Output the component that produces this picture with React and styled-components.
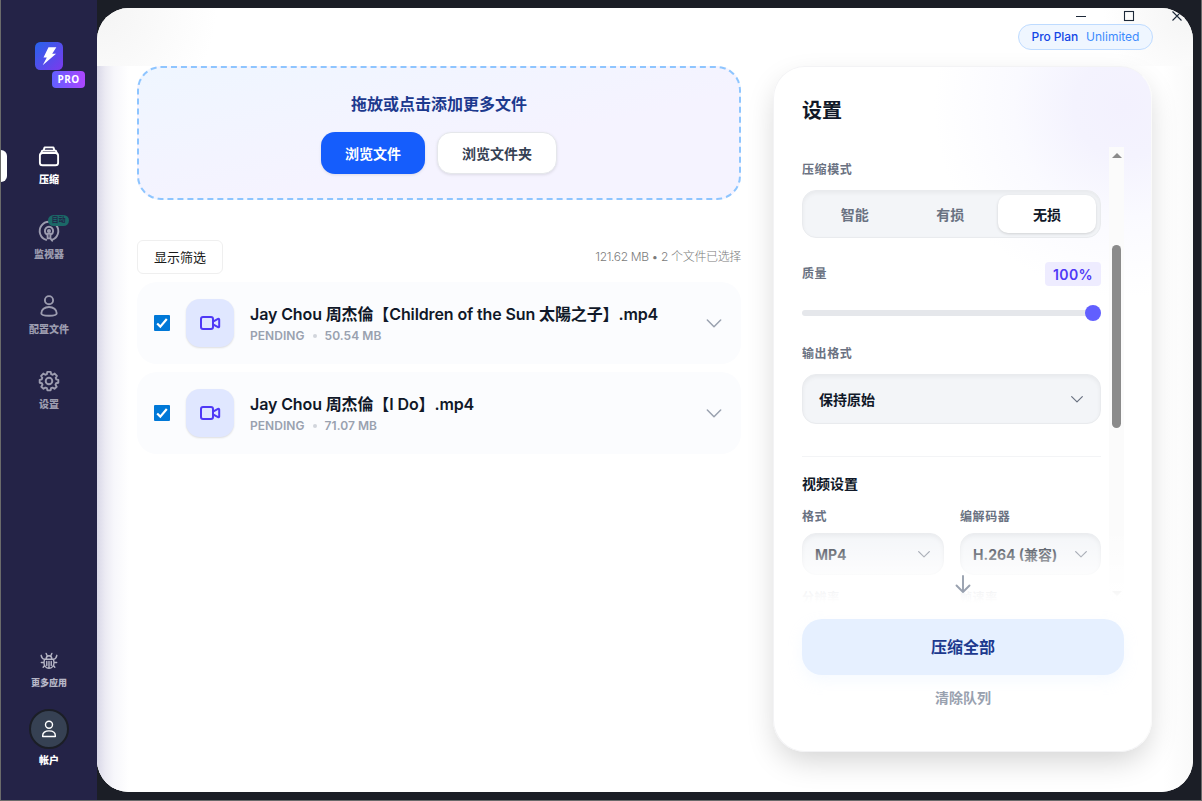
import React from 'react';
import styled, { createGlobalStyle, css } from 'styled-components';

const navItems = [
  { id: 'compress', label: '压缩', active: true },
  { id: 'monitor', label: '监视器', badge: '自动' },
  { id: 'profiles', label: '配置文件' },
  { id: 'settings', label: '设置' },
];

const files = [
  { name: 'Jay Chou 周杰倫【Children of the Sun 太陽之子】.mp4', size: '50.54 MB' },
  { name: 'Jay Chou 周杰倫【I Do】.mp4', size: '71.07 MB' },
];

const modes = ['智能', '有损', '无损'];

const NavIcon = ({ id }) => {
  if (id === 'compress') {
    return (
      <Icon $size={24} $stroke={1.9}>
        <rect x='2.9' y='9' width='18.2' height='12.3' rx='2.6' />
        <path d='M4.2 9.2 5.2 6.6H18.8L19.8 9.2M6.6 6.4 7.6 3.4H16.4L17.4 6.4' />
      </Icon>
    );
  }
  if (id === 'monitor') {
    return (
      <Icon $size={24} $stroke={1.9}>
        <path d='M9.2 20.9A9.3 9.3 0 1 1 14.8 20.9' />
        <path d='M9.6 15.2A4.1 4.1 0 1 1 14.4 15.2' />
        <circle cx='12' cy='12' r='1.1' />
        <path d='M10.6 14.6H13.4V19.4H10.6ZM13.4 19.4 15.2 21.8' />
      </Icon>
    );
  }
  if (id === 'profiles') {
    return (
      <Icon $size={24} $stroke={1.9}>
        <circle cx='12' cy='6.2' r='4.1' />
        <path d='M4.3 19.3C4.3 15.6 7.6 13 12 13S19.7 15.6 19.7 19.3C19.7 21.2 17 21.8 12 21.8S4.3 21.2 4.3 19.3Z' />
      </Icon>
    );
  }
  return (
    <Icon $size={24} $stroke={1.9}>
      <circle cx='12' cy='12' r='3.3' />
      <path d='M10.3 2.9H13.7L14.2 5.2 15.7 5.8 17.7 4.6 19.9 6.9 18.7 8.8 19.2 10.3 21.3 10.8V13.8L19.1 14.3 18.5 15.7 19.7 17.7 17.5 19.8 15.6 18.6 14.1 19.2 13.6 21.4H10.4L9.9 19.2 8.4 18.6 6.5 19.8 4.3 17.7 5.5 15.7 4.9 14.3 2.7 13.8V10.8L4.8 10.3 5.3 8.8 4.1 6.9 6.3 4.6 8.3 5.8 9.8 5.2Z' />
    </Icon>
  );
};

const BugIcon = () => (
  <Icon $size={20} $stroke={1.7}>
    <path d='M6.6 9.8H17.4L18 13.8C18 17.8 15.6 20.8 12 20.8S6 17.8 6 13.8ZM12 12.5V20.5M8.6 9.6C8.6 7.4 9.8 5.6 12 5.6S15.4 7.4 15.4 9.6M9.8 5.8 8.6 3M14.2 5.8 15.4 3M6 13.8H2.8M18 13.8H21.2M6.6 10C4.2 9.4 3 7.8 2.6 5.2M17.4 10C19.8 9.4 21 7.8 21.4 5.2M6.9 17.2 5 19.4M17.1 17.2 19 19.4M9.3 12.6V17.4M14.7 12.6V17.4' />
  </Icon>
);

const VideoIcon = () => (
  <Icon $size={24} $stroke={2}>
    <rect x='3' y='6' width='12' height='12' rx='2' />
    <path d='M15 10.6 20 7.8C20.6 7.5 21.2 7.9 21.2 8.5V15.5C21.2 16.1 20.6 16.5 20 16.2L15 13.4' />
  </Icon>
);

const Chevron = ({ size }) => (
  <Icon $size={size} $stroke={1.8}>
    <path d='M4 8.4 12 16.4 20 8.4' />
  </Icon>
);

const Select = ({ children, small }) => (
  <SelectBox $small={small}>
    <span>{children}</span>
    <Chevron size={16} />
  </SelectBox>
);

const Sidebar = () => (
  <StyledSidebar>
    <Logo>
      <svg width='28' height='28' viewBox='0 0 27 27'>
        <defs>
          <linearGradient id='logo' x1='0' y1='0' x2='1' y2='1'>
            <stop offset='0' stopColor='#2663eb' />
            <stop offset='1' stopColor='#7c3aed' />
          </linearGradient>
        </defs>
        <rect width='27' height='27' rx='5' fill='url(#logo)' />
        <path d='M13 5H20.6L16.6 11.4H20.3L7.4 22.3 11.4 15H8.2Z' fill='#fff' />
      </svg>
      <ProBadge>PRO</ProBadge>
    </Logo>
    <Nav>
      {navItems.map((item) => (
        <NavItem key={item.id} $active={item.active}>
          <NavIcon id={item.id} />
          {item.badge && <AutoBadge>{item.badge}</AutoBadge>}
          <span>{item.label}</span>
        </NavItem>
      ))}
    </Nav>
    <MoreApps>
      <BugIcon />
      <span>更多应用</span>
    </MoreApps>
    <Account>
      <Avatar>
        <Icon $size={20} $stroke={1.7}>
          <circle cx='12' cy='6.8' r='4.2' />
          <path d='M4.4 21V20C4.4 16.4 7.4 14.2 12 14.2S19.6 16.4 19.6 20V21Z' />
        </Icon>
      </Avatar>
      <span>帐户</span>
    </Account>
  </StyledSidebar>
);

const Header = () => (
  <StyledHeader>
    <WindowControls>
      <svg width='12' height='12' viewBox='0 0 12 12'>
        <path d='M1 6.5H11' />
      </svg>
      <svg width='12' height='12' viewBox='0 0 12 12'>
        <rect x='1.5' y='1.5' width='9' height='9' />
      </svg>
      <svg width='12' height='12' viewBox='0 0 12 12'>
        <path d='M1.5 1.5 10.5 10.5M10.5 1.5 1.5 10.5' />
      </svg>
    </WindowControls>
    <Plan>
      <b>Pro Plan</b>
      <span>Unlimited</span>
    </Plan>
  </StyledHeader>
);

const FileRow = ({ file }) => (
  <StyledFile>
    <Check>
      <svg width='16' height='16' viewBox='0 0 16 16'>
        <path d='M3.2 8.5 6.3 11.6 12.8 4' fill='none' stroke='#fff' strokeWidth='2.2' />
      </svg>
    </Check>
    <Thumb>
      <VideoIcon />
    </Thumb>
    <FileInfo>
      <h3>{file.name}</h3>
      <p>
        <span>PENDING</span>
        <i />
        <em>{file.size}</em>
      </p>
    </FileInfo>
    <Chevron size={20} />
  </StyledFile>
);

const Settings = () => (
  <Card>
    <h2>设置</h2>
    <ScrollArea>
      <Fields>
        <Label>压缩模式</Label>
        <Segmented>
          {modes.map((mode, i) => (
            <Segment key={mode} $active={i === 2}>
              {mode}
            </Segment>
          ))}
        </Segmented>
        <QualityRow>
          <Label>质量</Label>
          <Percent>100%</Percent>
        </QualityRow>
        <Slider>
          <div className='thumb'></div>
        </Slider>
        <Label>输出格式</Label>
        <Select>保持原始</Select>
        <div className='line'></div>
        <h4>视频设置</h4>
        <Columns>
          <div>
            <Label>格式</Label>
            <Select small>MP4</Select>
            <Label>分辨率</Label>
          </div>
          <div>
            <Label>编解码器</Label>
            <Select small>H.264 (兼容)</Select>
            <Label>帧速率</Label>
          </div>
        </Columns>
      </Fields>
      <Scrollbar>
        <i className='up' />
        <div className='handle' />
        <i className='down' />
      </Scrollbar>
      <Fade>
        <Icon $size={24} $stroke={1.9}>
          <path d='M12 4V20M5.5 13.5 12 20 18.5 13.5' />
        </Icon>
      </Fade>
    </ScrollArea>
    <CompressButton>压缩全部</CompressButton>
    <ClearButton>清除队列</ClearButton>
  </Card>
);

const App = () => {
  return (
    <Shell>
      <GlobalStyle />
      <Sidebar />
      <Panel>
        <Header />
        <Content>
          <Queue>
            <DropZone>
              <h3>拖放或点击添加更多文件</h3>
              <div>
                <BrowseButton $primary>浏览文件</BrowseButton>
                <BrowseButton>浏览文件夹</BrowseButton>
              </div>
            </DropZone>
            <Toolbar>
              <FilterButton>显示筛选</FilterButton>
              <span>121.62 MB • 2 个文件已选择</span>
            </Toolbar>
            {files.map((file) => (
              <FileRow key={file.name} file={file} />
            ))}
          </Queue>
          <Settings />
        </Content>
      </Panel>
    </Shell>
  );
};

const GlobalStyle = createGlobalStyle`
  * {
    box-sizing: border-box;
    margin: 0;
    padding: 0;
  }

  body {
    font-family: Inter, 'Noto Sans CJK SC', sans-serif;
    color: #101828;
    overflow: hidden;
  }

  button {
    font-family: inherit;
    border: none;
  }
`;

const Icon = styled.svg.attrs({ viewBox: '0 0 24 24' })`
  width: ${(p) => p.$size}px;
  height: ${(p) => p.$size}px;
  flex: none;
  fill: none;
  stroke: currentColor;
  stroke-width: ${(p) => p.$stroke};
  stroke-linecap: round;
  stroke-linejoin: round;
`;

const Shell = styled.div`
  width: 1202px;
  height: 801px;
  display: flex;
  background: #1b1e26;
  border: solid #6b6b6b;
  border-width: 0 1px 1px;
`;

const StyledSidebar = styled.aside`
  width: 96px;
  flex: none;
  display: flex;
  flex-direction: column;
  align-items: center;
  background: #242347;
  color: #fff;
  padding-top: 42px;
`;

const Logo = styled.div`
  position: relative;
  height: 28px;

  svg {
    display: block;
  }
`;

const ProBadge = styled.span`
  position: absolute;
  left: 17px;
  top: 29px;
  width: 33px;
  height: 17px;
  border-radius: 4px;
  background: linear-gradient(90deg, #615fff, #ad46ff);
  font: 700 10px/17px 'Open Sans', sans-serif;
  letter-spacing: 0.4px;
  text-align: center;
`;

const Nav = styled.nav`
  width: 100%;
  margin-top: 67px;
  display: flex;
  flex-direction: column;
`;

const NavItem = styled.div`
  position: relative;
  height: 75px;
  padding-top: 7px;
  display: flex;
  flex-direction: column;
  align-items: center;
  gap: 3px;
  color: ${(p) => (p.$active ? '#fff' : '#9c9caf')};
  font-size: 10px;
  font-weight: 800;
  line-height: 16px;

  ${(p) =>
    p.$active &&
    css`
      &::before {
        content: '';
        position: absolute;
        left: 0;
        top: 13px;
        width: 6px;
        height: 32px;
        background: #fff;
        border-radius: 0 6px 6px 0;
      }
    `}
`;

const AutoBadge = styled.em`
  position: absolute;
  left: 47px;
  top: 3px;
  width: 21px;
  height: 11px;
  border-radius: 6px;
  background: #1b6867;
  color: #222447;
  font: 700 7px/9px 'Noto Sans CJK SC', sans-serif;
  text-align: center;
`;

const MoreApps = styled.div`
  margin-top: auto;
  display: flex;
  flex-direction: column;
  align-items: center;
  gap: 4px;
  color: #b6b6c6;
  font-size: 9px;
  font-weight: 800;
  line-height: 16px;
`;

const Account = styled.div`
  margin: 18px 0 32px;
  display: flex;
  flex-direction: column;
  align-items: center;
  gap: 3px;
  font-size: 10px;
  font-weight: 800;
  line-height: 16px;
`;

const Avatar = styled.div`
  width: 40px;
  height: 40px;
  border: 2px solid #1b1e26;
  border-radius: 50%;
  background: #364153;
  display: grid;
  place-items: center;
`;

const Panel = styled.main`
  width: 1096px;
  height: 784px;
  margin-top: 8px;
  border-radius: 32px;
  background: #fff;
  display: flex;
  flex-direction: column;
  overflow: hidden;
`;

const StyledHeader = styled.header`
  height: 58px;
  flex: none;
  display: flex;
  flex-direction: column;
  align-items: flex-end;
  padding-right: 40px;
  background: radial-gradient(circle at 0 0, #f4f4f4, #fff 120px),
    radial-gradient(circle at 100% 0, #f4f4f4, #fff 90px);
  background-size: 50% 100%;
  background-repeat: no-repeat;
  background-position: 0 0, 100% 0;
`;

const WindowControls = styled.div`
  display: flex;
  gap: 36px;
  margin-right: -30px;
  height: 16px;
  padding-top: 2px;

  svg {
    fill: none;
    stroke: #1d2939;
    stroke-width: 1.1;
  }
`;

const Plan = styled.div`
  width: 135px;
  height: 26px;
  padding-bottom: 2px;
  border: 1px solid #bedbff;
  border-radius: 13px;
  background: #eff6ff;
  display: flex;
  justify-content: center;
  align-items: center;
  gap: 8px;
  font-size: 12px;
  color: #3d8bfd;

  b {
    color: #1447e6;
    font-weight: 500;
    letter-spacing: -0.1px;
  }
`;

const Content = styled.div`
  flex: 1;
  display: flex;
  gap: 32px;
  padding: 0 40px;
  background: linear-gradient(90deg, #d9d8e8, #ebeaf3 8px, #f7f7fb 17px, rgba(255, 255, 255, 0) 32px),
    linear-gradient(270deg, #f9f9f9, #fff 30px);
`;

const Queue = styled.section`
  width: 604px;
`;

const DropZone = styled.div`
  height: 134px;
  border: 2px dashed #8ec5ff;
  border-radius: 24px;
  background: linear-gradient(to bottom right, #eff6ff, #f5f3ff 60%);
  padding-top: 24px;
  text-align: center;

  h3 {
    font-size: 16px;
    line-height: 24px;
    font-weight: 600;
    color: #1c398e;
  }

  div {
    display: flex;
    justify-content: center;
    gap: 12px;
    margin-top: 16px;
  }
`;

const BrowseButton = styled.button`
  height: 42px;
  padding: 0 24px 1px;
  border-radius: 14px;
  font-size: 14px;
  font-weight: 700;
  background: #fff;
  color: #364153;
  border: 1px solid #e5e7eb;
  box-shadow: 0 1px 3px rgba(0, 0, 0, 0.1);

  ${(p) =>
    p.$primary &&
    css`
      background: #155dfc;
      color: #fff;
      border: none;
    `}
`;

const Toolbar = styled.div`
  display: flex;
  align-items: center;
  justify-content: space-between;
  margin-top: 40px;
  height: 34px;
  font-size: 12px;
  color: #7b7b7b;

  span {
    letter-spacing: -0.35px;
    padding-bottom: 3px;
    font-weight: 300;
  }
`;

const FilterButton = styled.button`
  width: 86px;
  height: 34px;
  padding-bottom: 2px;
  border: 1px solid #efefef;
  border-radius: 6px;
  background: #fff;
  color: #1a1a1a;
  font-size: 13px;
`;

const StyledFile = styled.div`
  height: 82px;
  margin-top: 8px;
  padding: 0 17px;
  border-radius: 20px;
  background: #fbfcfe;
  display: flex;
  align-items: center;
  color: #99a1af;
`;

const Check = styled.span`
  width: 16px;
  height: 16px;
  background: #0078d7;
  border-radius: 1px;

  svg {
    display: block;
  }
`;

const Thumb = styled.div`
  width: 48px;
  height: 48px;
  margin: 0 16px;
  border-radius: 14px;
  background: #e0e7ff;
  color: #4f39f6;
  display: grid;
  place-items: center;
  box-shadow: 0 1px 2px rgba(0, 0, 0, 0.12);
`;

const FileInfo = styled.div`
  flex: 1;

  h3 {
    font-size: 16px;
    line-height: 24px;
    font-weight: 600;
    letter-spacing: -0.12px;
    color: #101828;
  }

  p {
    display: flex;
    align-items: center;
    font-size: 12px;
    font-weight: 600;
    line-height: 18px;
    padding-top: 1px;
    margin-bottom: -1px;
    letter-spacing: 0.05px;
  }

  i {
    width: 4px;
    height: 4px;
    margin: 0 8px;
    border-radius: 50%;
    background: #d1d5dc;
  }

  em {
    font-style: normal;
  }
`;

const Card = styled.section`
  width: 379px;
  height: 686px;
  padding: 30px 27px 0 28px;
  border: 1px solid #f3f3f5;
  border-right-color: #fafafa;
  border-radius: 32px;
  background: radial-gradient(circle at 350px 40px, #f3f1fe, #f4f3fe 50px, #fafaff 110px, #fff 190px);
  box-shadow: 0 12px 30px -4px rgba(0, 0, 0, 0.18);
  display: flex;
  flex-direction: column;

  h2 {
    font-size: 20px;
    line-height: 28px;
    font-weight: 700;
  }
`;

const ScrollArea = styled.div`
  position: relative;
  height: 456px;
  margin-top: 22px;
  display: flex;
  justify-content: space-between;
  overflow: hidden;
`;

const Label = styled.label`
  display: block;
  font-size: 12px;
  line-height: 16px;
  font-weight: 600;
  letter-spacing: 0.6px;
  color: #6a7282;
`;

const Fields = styled.div`
  width: 299px;
  padding-top: 15px;

  .line {
    height: 1px;
    margin: 32px 0 17px;
    background: #f3f4f6;
  }

  h4 {
    font-size: 14px;
    line-height: 20px;
    font-weight: 700;
  }
`;

const Segmented = styled.div`
  height: 48px;
  margin-top: 12px;
  padding: 4px;
  border: 1px solid #e9ebee;
  border-radius: 14px;
  background: #f3f5f8;
  box-shadow: inset 0 2px 4px rgba(0, 0, 0, 0.05);
  display: flex;
`;

const Segment = styled.button`
  flex: ${(p) => (p.$active ? '0 0 98px' : '1')};
  border-radius: 10px;
  background: ${(p) => (p.$active ? '#fff' : 'transparent')};
  color: ${(p) => (p.$active ? '#101828' : '#6a7282')};
  box-shadow: ${(p) => (p.$active ? '0 1px 3px rgba(0, 0, 0, 0.15)' : 'none')};
  font-size: 14px;
  font-weight: 700;
`;

const QualityRow = styled.div`
  display: flex;
  justify-content: space-between;
  align-items: center;
  margin-top: 24px;
`;

const Percent = styled.span`
  width: 56px;
  height: 24px;
  border-radius: 4px;
  background: #eeecff;
  color: #4f39f6;
  font-size: 14px;
  line-height: 25px;
  font-weight: 600;
  letter-spacing: 0.4px;
  text-align: center;
`;

const Slider = styled.div`
  height: 6px;
  margin: 24px 0 30px;
  border-radius: 3px;
  background: #e5e7eb;
  display: flex;
  align-items: center;
  justify-content: flex-end;

  .thumb {
    width: 16px;
    height: 16px;
    border-radius: 50%;
    background: #615fff;
  }
`;

const SelectBox = styled.div`
  height: ${(p) => (p.$small ? 42 : 50)}px;
  margin: ${(p) => (p.$small ? '8px 0 15px' : '12px 0 0')};
  padding: ${(p) => (p.$small ? '0 11px 0 12px' : '0 15px 0 16px')};
  border: 1px solid #e9ebee;
  border-radius: 14px;
  background: #f3f5f8;
  box-shadow: inset 0 2px 4px rgba(0, 0, 0, 0.05);
  display: flex;
  align-items: center;
  justify-content: space-between;
  font-size: 14px;
  font-weight: 700;

  svg {
    color: #6a7282;
  }
`;

const Columns = styled.div`
  display: grid;
  grid-template-columns: 142px 141px;
  gap: 16px;
  margin-top: 15px;
`;

const Scrollbar = styled.div`
  width: 15px;
  display: flex;
  flex-direction: column;
  align-items: center;
  padding: 6px 0 7px;
  background: #fbfbfb;

  i {
    border: solid transparent;
    border-width: 0 5px;
  }

  .up {
    border-bottom: 5px solid #8b8b8b;
  }

  .handle {
    width: 9px;
    height: 183px;
    margin-top: 87px;
    border-radius: 5px;
    background: #8b8b8b;
  }

  .down {
    margin-top: auto;
    border-top: 5px solid #8b8b8b;
  }
`;

const Fade = styled.div`
  position: absolute;
  left: 0;
  right: 0;
  bottom: 0;
  height: 74px;
  display: flex;
  justify-content: center;
  align-items: flex-end;
  padding-bottom: 7px;
  background: linear-gradient(rgba(255, 255, 255, 0), rgba(255, 255, 255, 0.84) 48px, #fff);
  color: #99a1af;
`;

const CompressButton = styled.button`
  height: 56px;
  flex: none;
  margin-top: 16px;
  padding-bottom: 2px;
  border-radius: 20px;
  background: #e6f0ff;
  color: #1c398e;
  font-size: 16px;
  font-weight: 700;
  box-shadow: 0 6px 14px rgba(219, 234, 254, 0.25);
`;

const ClearButton = styled.button`
  margin-top: 13px;
  background: none;
  color: #99a1af;
  font-size: 14px;
  line-height: 20px;
  font-weight: 600;
`;

export default App;
